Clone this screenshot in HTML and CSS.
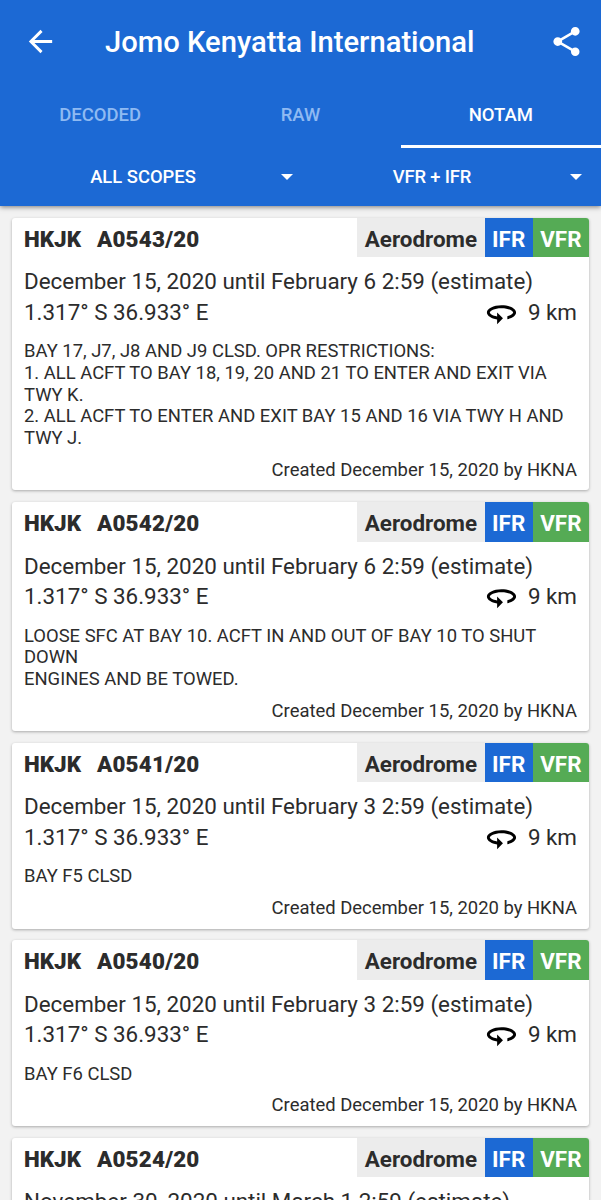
FILE: index.html
```html
<!DOCTYPE html>
<html lang="en">
<head>
<meta charset="utf-8">
<title>Jomo Kenyatta International</title>
<link rel="stylesheet" href="styles.css">
</head>
<body>
<svg class="defs" width="0" height="0">
  <symbol id="radius" viewBox="0 0 24 24"><path d="M12 7C6.48 7 2 9.24 2 12c0 2.24 2.94 4.13 7 4.77V20l4-4-4-4v2.73c-3.15-.56-5-1.9-5-2.73 0-1.06 3.04-3 8-3s8 1.94 8 3c0 .73-1.46 1.89-4 2.53v2.05c3.53-.77 6-2.53 6-4.58 0-2.76-4.48-5-10-5z"/></symbol>
</svg>
<header class="appbar">
  <div class="toolbar">
    <svg class="back" viewBox="0 0 24 24"><path d="M20 11H7.83l5.59-5.59L12 4l-8 8 8 8 1.41-1.41L7.83 13H20v-2z"/></svg>
    <h1 class="title">Jomo Kenyatta International</h1>
    <svg class="share" viewBox="0 0 24 24"><path d="M18 16.08c-.76 0-1.44.3-1.96.77L8.91 12.7c.05-.23.09-.46.09-.7s-.04-.47-.09-.7l7.05-4.11c.54.5 1.25.81 2.04.81 1.66 0 3-1.34 3-3s-1.34-3-3-3-3 1.34-3 3c0 .24.04.47.09.7L8.04 9.81C7.5 9.31 6.79 9 6 9c-1.66 0-3 1.34-3 3s1.34 3 3 3c.79 0 1.5-.31 2.04-.81l7.12 4.16c-.05.21-.08.43-.08.65 0 1.61 1.31 2.92 2.92 2.92s2.92-1.31 2.92-2.92-1.31-2.92-2.92-2.92z"/></svg>
  </div>
  <nav class="tabs">
    <span class="tab">DECODED</span>
    <span class="tab">RAW</span>
    <span class="tab active">NOTAM</span>
  </nav>
  <div class="filters">
    <div class="filter"><span class="filter-label">ALL SCOPES</span><i class="caret"></i></div>
    <div class="filter flight-rules"><span class="filter-label">VFR + IFR</span><i class="caret"></i></div>
  </div>
</header>
<main class="list">
  <article class="card">
    <div class="head"><b class="code">HKJK</b><b class="number">A0543/20</b><span class="tag scope">Aerodrome</span><span class="tag ifr">IFR</span><span class="tag vfr">VFR</span></div>
    <div class="row">December 15, 2020 until February 6 2:59 (estimate)</div>
    <div class="row"><span>1.317° S 36.933° E</span><span class="radius"><svg class="ring"><use href="#radius"/></svg>9 km</span></div>
    <p class="text">BAY 17, J7, J8 AND J9 CLSD. OPR RESTRICTIONS:<br>1. ALL ACFT TO BAY 18, 19, 20 AND 21 TO ENTER AND EXIT VIA<br>TWY K.<br>2. ALL ACFT TO ENTER AND EXIT BAY 15 AND 16 VIA TWY H AND<br>TWY J.</p>
    <div class="created">Created December 15, 2020 by HKNA</div>
  </article>
  <article class="card">
    <div class="head"><b class="code">HKJK</b><b class="number">A0542/20</b><span class="tag scope">Aerodrome</span><span class="tag ifr">IFR</span><span class="tag vfr">VFR</span></div>
    <div class="row">December 15, 2020 until February 6 2:59 (estimate)</div>
    <div class="row"><span>1.317° S 36.933° E</span><span class="radius"><svg class="ring"><use href="#radius"/></svg>9 km</span></div>
    <p class="text">LOOSE SFC AT BAY 10. ACFT IN AND OUT OF BAY 10 TO SHUT<br>DOWN<br>ENGINES AND BE TOWED.</p>
    <div class="created">Created December 15, 2020 by HKNA</div>
  </article>
  <article class="card">
    <div class="head"><b class="code">HKJK</b><b class="number">A0541/20</b><span class="tag scope">Aerodrome</span><span class="tag ifr">IFR</span><span class="tag vfr">VFR</span></div>
    <div class="row">December 15, 2020 until February 3 2:59 (estimate)</div>
    <div class="row"><span>1.317° S 36.933° E</span><span class="radius"><svg class="ring"><use href="#radius"/></svg>9 km</span></div>
    <p class="text">BAY F5 CLSD</p>
    <div class="created">Created December 15, 2020 by HKNA</div>
  </article>
  <article class="card">
    <div class="head"><b class="code">HKJK</b><b class="number">A0540/20</b><span class="tag scope">Aerodrome</span><span class="tag ifr">IFR</span><span class="tag vfr">VFR</span></div>
    <div class="row">December 15, 2020 until February 3 2:59 (estimate)</div>
    <div class="row"><span>1.317° S 36.933° E</span><span class="radius"><svg class="ring"><use href="#radius"/></svg>9 km</span></div>
    <p class="text">BAY F6 CLSD</p>
    <div class="created">Created December 15, 2020 by HKNA</div>
  </article>
  <article class="card">
    <div class="head"><b class="code">HKJK</b><b class="number">A0524/20</b><span class="tag scope">Aerodrome</span><span class="tag ifr">IFR</span><span class="tag vfr">VFR</span></div>
    <div class="row">November 30, 2020 until March 1 2:59 (estimate)</div>
  </article>
</main>
</body>
</html>
```
FILE: styles.css
```css
* { box-sizing: border-box; }
body {
  margin: 0;
  height: 1200px;
  overflow: hidden;
  display: flex;
  flex-direction: column;
  background: #f2f2f2;
  color: #2c2c2c;
  font-family: Roboto, sans-serif;
}
.defs { display: none; }
.appbar {
  position: relative;
  flex: none;
  height: 206px;
  background: #1c69d4;
  color: #fff;
  box-shadow: 0 1px 5px rgba(0, 0, 0, .5);
}
.toolbar {
  height: 82px;
  padding: 0 17px 0 23px;
  display: flex;
  align-items: center;
}
.toolbar svg { width: 35px; height: 35px; fill: #fff; flex: none; }
.title {
  flex: 1;
  margin: 1px 0 0 47px;
  font-size: 29.2px;
  font-weight: 500;
  white-space: nowrap;
}
.tabs {
  height: 66px;
  display: grid;
  grid-template: 66px / repeat(3, 1fr);
}
.tab {
  text-align: center;
  line-height: 66px;
  font-size: 18.5px;
  font-weight: 500;
  color: #8fbaf2;
}
.tab.active { color: #fff; border-bottom: 3px solid #fff; }
.filters { height: 58px; display: flex; }
.filter {
  width: 300px;
  padding: 0 7px 0 5px;
  display: flex;
  align-items: center;
}
.flight-rules { width: 289px; padding-left: 0; }
.filter-label {
  flex: 1;
  text-align: center;
  line-height: 60px;
  font-size: 18.4px;
  font-weight: 500;
}
.flight-rules .filter-label { padding-right: 6px; letter-spacing: -.15px; }
.caret { border: 6px solid transparent; border-top-color: #fff; border-bottom: 0; }
.list { padding: 11.8px 12px 0; }
.card {
  margin-bottom: 11.7px;
  padding-bottom: 9.5px;
  background: #fff;
  border-radius: 3px;
  overflow: hidden;
  box-shadow: 0 1px 3px rgba(0, 0, 0, .3);
}
.head {
  height: 39.5px;
  margin-bottom: 9px;
  padding-left: 12px;
  display: flex;
  line-height: 43px;
  font-size: 22.4px;
  font-weight: 700;
}
.number { margin-left: 16px; letter-spacing: .2px; }
.tag { padding: 0 7.5px; }
.scope { margin-left: auto; background: #ececec; }
.ifr { background: #1c69d4; color: #fff; }
.vfr { background: #55ab55; color: #fff; }
.row {
  height: 30.5px;
  padding: 0 12px;
  display: flex;
  justify-content: space-between;
  line-height: 31.5px;
  font-size: 22.4px;
  white-space: nowrap;
}
.radius { display: flex; }
.ring { width: 35px; height: 35px; margin: -2px 9px 0 0; fill: #000; }
.text {
  margin: 13px 12px 10px;
  line-height: 21.7px;
  font-size: 18.43px;
  white-space: nowrap;
}
.created { padding: 0 12px; text-align: right; line-height: 22px; font-size: 18.43px; }
```
